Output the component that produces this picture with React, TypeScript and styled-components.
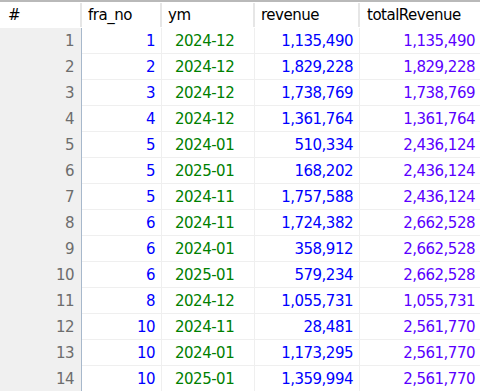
import { Fragment } from "react";
import styled, { createGlobalStyle } from "styled-components";

const GlobalStyle = createGlobalStyle`
  html, body {
    margin: 0;
    padding: 0;
    background: #ffffff;
  }
`;

// 결과 그리드 데이터
const rows: [number, number, string, number, number][] = [
  [1, 1, "2024-12", 1135490, 1135490],
  [2, 2, "2024-12", 1829228, 1829228],
  [3, 3, "2024-12", 1738769, 1738769],
  [4, 4, "2024-12", 1361764, 1361764],
  [5, 5, "2024-01", 510334, 2436124],
  [6, 5, "2025-01", 168202, 2436124],
  [7, 5, "2024-11", 1757588, 2436124],
  [8, 6, "2024-11", 1724382, 2662528],
  [9, 6, "2024-01", 358912, 2662528],
  [10, 6, "2025-01", 579234, 2662528],
  [11, 8, "2024-12", 1055731, 1055731],
  [12, 10, "2024-11", 28481, 2561770],
  [13, 10, "2024-01", 1173295, 2561770],
  [14, 10, "2025-01", 1359994, 2561770],
];

const fmt = (n: number) => n.toLocaleString("en-US");

const Grid = styled.div`
  width: 480px;
  display: grid;
  grid-template-columns: 82px 80px 93px 105px 120px;
  grid-auto-rows: 26px;
  border-top: 2px solid #b9b9b9;
  font-family: "DejaVu Sans", "Liberation Sans", sans-serif;
  font-size: 15px;
  letter-spacing: -0.5px;
  background: #ffffff;
`;

const HeadCell = styled.div<{ $last?: boolean; $first?: boolean }>`
  position: relative;
  display: flex;
  align-items: center;
  padding-left: ${(p) => (p.$first ? "8px" : p.$last ? "7px" : "6px")};
  color: #000000;
  background: #ffffff;

  &::after {
    content: "";
    position: absolute;
    right: 0;
    top: 1px;
    bottom: 1px;
    width: 2px;
    background: ${(p) => (p.$last ? "transparent" : "#e6e6e6")};
  }
`;

const IndexCell = styled.div`
  display: flex;
  align-items: center;
  justify-content: flex-end;
  padding-right: 7px;
  background: #f0f0f0;
  border-right: 1px solid #a7b8cb;
  color: #6d6d6d;
`;

const Cell = styled.div<{ $color: string; $align?: "left" | "right"; $last?: boolean }>`
  display: flex;
  align-items: center;
  justify-content: ${(p) => (p.$align === "left" ? "flex-start" : "flex-end")};
  padding: ${(p) => (p.$align === "left" ? "0 0 0 13px" : p.$last ? "0 5px 0 0" : "0 6px 0 0")};
  border-right: ${(p) => (p.$last ? "none" : "1px solid #efefef")};
  border-bottom: 1px solid #efefef;
  color: ${(p) => p.$color};
  white-space: nowrap;
`;

export default function App() {
  return (
    <>
      <GlobalStyle />
      <Grid>
        <HeadCell $first>#</HeadCell>
        <HeadCell>fra_no</HeadCell>
        <HeadCell>ym</HeadCell>
        <HeadCell>revenue</HeadCell>
        <HeadCell $last>totalRevenue</HeadCell>
        {rows.map(([idx, fra, ym, rev, total]) => (
          <Fragment key={idx}>
            <IndexCell>{idx}</IndexCell>
            <Cell $color="#0000ff">{fra}</Cell>
            <Cell $color="#008000" $align="left">{ym}</Cell>
            <Cell $color="#0000ff">{fmt(rev)}</Cell>
            <Cell $color="#5a00ff" $last>{fmt(total)}</Cell>
          </Fragment>
        ))}
      </Grid>
    </>
  );
}
